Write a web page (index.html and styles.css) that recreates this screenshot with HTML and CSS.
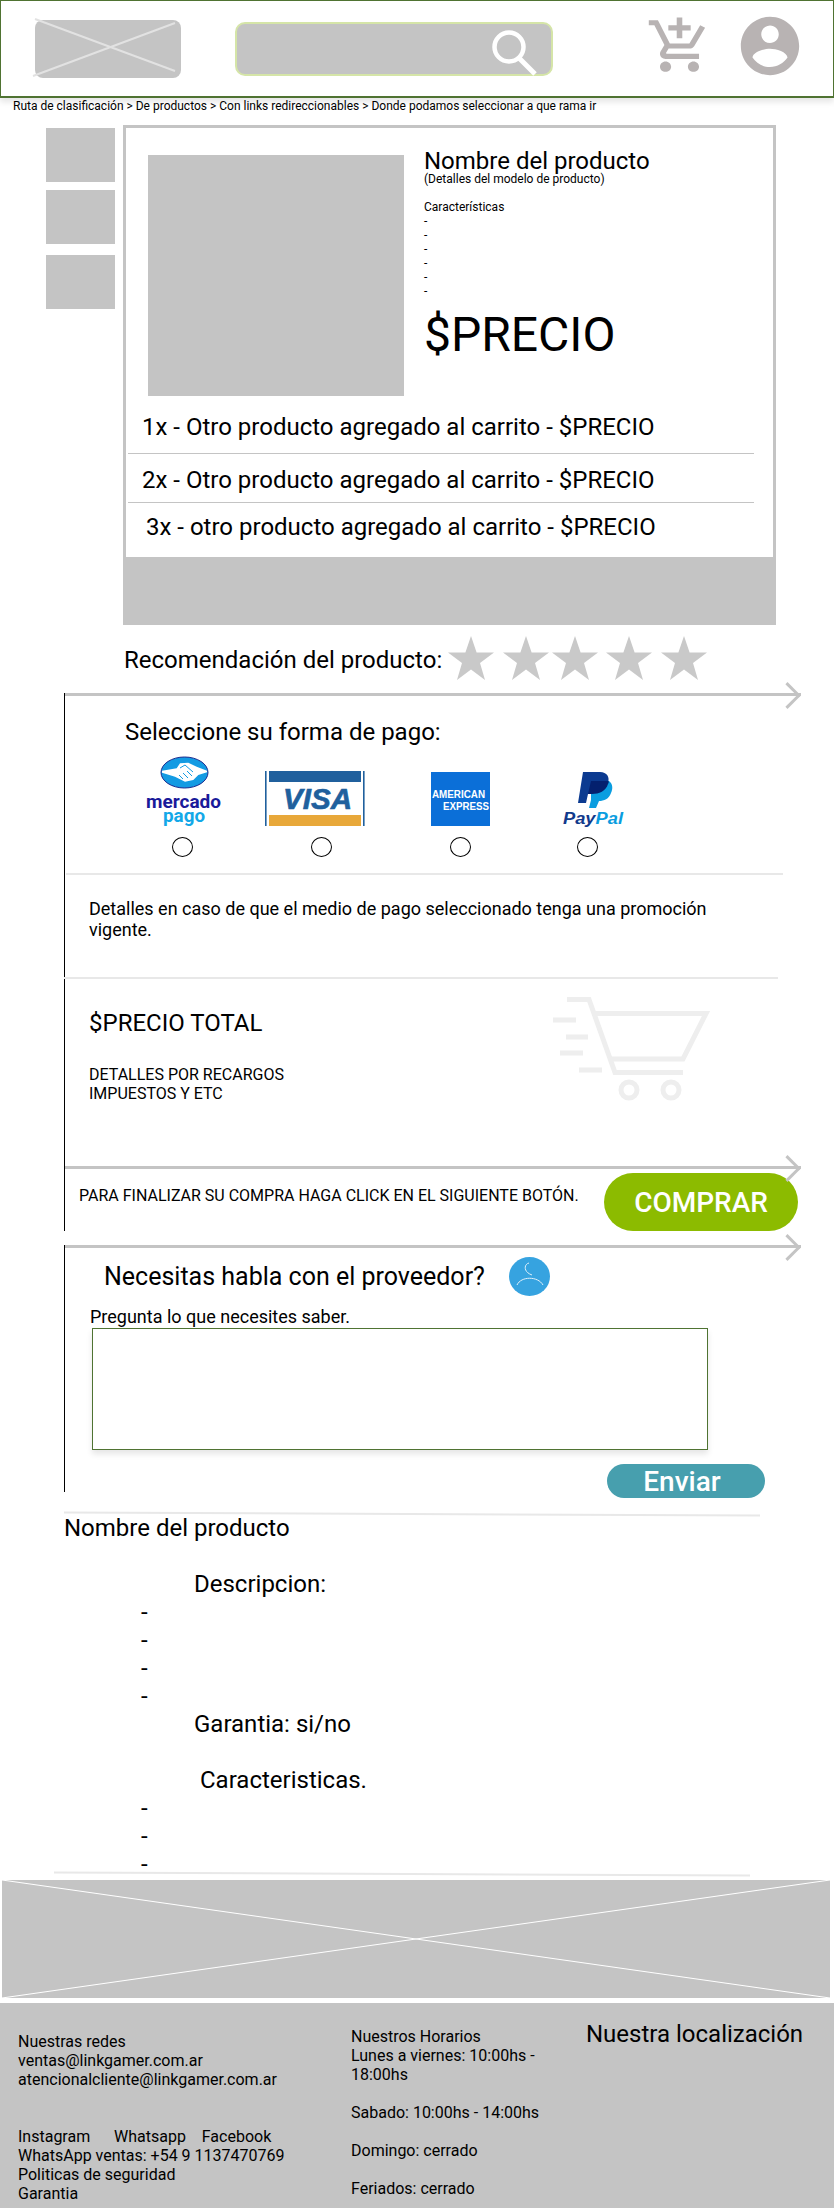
FILE: index.html
```html
<!doctype html>
<html>
<head>
    <meta charset="utf-8">
    <meta name="viewport" content="width=device-width,initial-scale=1">
    <title>Producto</title>
    <link rel="stylesheet" href="styles.css">
</head>

<body>
	<header class="top">
		<svg class="logo" viewBox="0 0 146 58" overflow="visible">
			<rect width="146" height="58" rx="8" fill="#c4c4c4"/>
			<path d="M0 -1L140 51M-2 56L140 3" stroke="#e2e2e2" stroke-width="2" fill="none"/>
		</svg>
		<div class="search">
			<svg class="search-icon" viewBox="0 0 48 48">
				<circle cx="18" cy="18" r="14.5" fill="none" stroke="#fff" stroke-width="4.5"/>
				<path d="M28 29L44 45" stroke="#fff" stroke-width="5" fill="none"/>
			</svg>
		</div>
		<svg class="cart" viewBox="0 0 24 24" preserveAspectRatio="none"><path fill="#b8b3b3" d="M11 9h2V6h3V4h-3V1h-2v3H8v2h3v3zm-4 9c-1.1 0-1.99.9-1.99 2S5.9 22 7 22s2-.9 2-2-.9-2-2-2zm10 0c-1.1 0-1.99.9-1.99 2s.89 2 1.99 2 2-.9 2-2-.9-2-2-2zm-9.83-3.25l.03-.12.9-1.63h7.45c.75 0 1.41-.41 1.75-1.03l3.86-7.01L19.42 4h-.01l-1.1 2-2.76 5H8.53l-.13-.27L6.16 6l-.95-2-.94-2H1v2h2l3.6 7.59-1.35 2.45c-.16.28-.25.61-.25.96 0 1.1.9 2 2 2h12v-2H7.42c-.13 0-.25-.11-.25-.25z"/></svg>
		<svg class="user" viewBox="0 0 24 24"><path fill="#b8b3b3" d="M12 2C6.48 2 2 6.48 2 12s4.48 10 10 10 10-4.48 10-10S17.52 2 12 2zm0 3c1.66 0 3 1.34 3 3s-1.34 3-3 3-3-1.34-3-3 1.34-3 3-3zm0 14.2c-2.5 0-4.71-1.28-6-3.22.03-1.99 4-3.08 6-3.08 1.99 0 5.97 1.09 6 3.08-1.29 1.94-3.5 3.22-6 3.22z"/></svg>
	</header>

	<div class="crumb">Ruta de clasificación &gt; De productos &gt; Con links redireccionables &gt; Donde podamos seleccionar a que rama ir</div>

	<section class="product">
		<div class="thumbs">
			<div class="thumb"></div>
			<div class="thumb"></div>
			<div class="thumb"></div>
		</div>
		<div class="box">
			<div class="box-main">
				<div class="photo"></div>
				<div class="info">
					<div class="info-name">Nombre del producto</div>
					<div class="info-model">(Detalles del modelo de producto)</div>
					<div class="info-list">Características<br>-<br>-<br>-<br>-<br>-<br>-</div>
					<div class="info-price">$PRECIO</div>
				</div>
			</div>
			<div class="extra extra-1">1x - Otro producto agregado al carrito - $PRECIO</div>
			<div class="extra extra-2">2x - Otro producto agregado al carrito - $PRECIO</div>
			<div class="extra extra-3">3x - otro producto agregado al carrito - $PRECIO</div>
			<div class="box-foot"></div>
		</div>
	</section>

	<div class="rating">
		<span class="rating-label">Recomendación del producto:</span>
		<svg class="star" viewBox="0 0 46 44"><path d="M23 0L28.6 16.5H46L32 27L37 44L23 33.5L9 44L14 27L0 16.5H17.4Z"/></svg>
		<svg class="star" viewBox="0 0 46 44"><path d="M23 0L28.6 16.5H46L32 27L37 44L23 33.5L9 44L14 27L0 16.5H17.4Z"/></svg>
		<svg class="star" viewBox="0 0 46 44"><path d="M23 0L28.6 16.5H46L32 27L37 44L23 33.5L9 44L14 27L0 16.5H17.4Z"/></svg>
		<svg class="star" viewBox="0 0 46 44"><path d="M23 0L28.6 16.5H46L32 27L37 44L23 33.5L9 44L14 27L0 16.5H17.4Z"/></svg>
		<svg class="star" viewBox="0 0 46 44"><path d="M23 0L28.6 16.5H46L32 27L37 44L23 33.5L9 44L14 27L0 16.5H17.4Z"/></svg>
	</div>

	<section class="pay">
		<div class="arrow"></div>
		<div class="pay-title">Seleccione su forma de pago:</div>
		<div class="methods">
			<svg class="mp" viewBox="0 0 76 70">
				<ellipse cx="38.5" cy="16.5" rx="23.5" ry="15.5" fill="#139be3" stroke="#1c2a8e" stroke-width="1"/>
				<path d="M16 14.7L30.7 12.3L34 7.3L42.3 6.7L50.7 10.7L61 14.7V16.3L52.3 19L47.3 24L39 25.7L29 20.7L16 16.7Z" fill="#fff"/>
				<path d="M34 12L39 9L47 16M33 19L37 23M37 17L42 22M41 15L46 20" stroke="#139be3" stroke-width="1" fill="none"/>
				<text x="0" y="52" class="mp-text" textLength="75" lengthAdjust="spacingAndGlyphs" fill="#1a1a9a">mercado</text>
				<text x="17" y="66" class="mp-text" textLength="42" lengthAdjust="spacingAndGlyphs" fill="#13a8e8">pago</text>
			</svg>
			<svg class="visa" viewBox="0 0 103 55">
				<rect x="2" width="1.6" height="55" fill="#20609d"/>
				<rect x="100" width="1.6" height="55" fill="#20609d"/>
				<rect x="6" width="92" height="11" fill="#20609d"/>
				<rect x="6" y="44" width="92" height="11" fill="#e8a83a"/>
				<text x="20" y="38" class="visa-text" textLength="69" lengthAdjust="spacingAndGlyphs">VISA</text>
			</svg>
			<svg class="amex" viewBox="0 0 59 54">
				<rect width="59" height="54" fill="#0b6fd8"/>
				<text x="1" y="26" class="amex-text" textLength="53" lengthAdjust="spacingAndGlyphs">AMERICAN</text>
				<text x="12" y="38" class="amex-text" textLength="46" lengthAdjust="spacingAndGlyphs">EXPRESS</text>
			</svg>
			<svg class="paypal" viewBox="0 0 60 54">
				<path d="M20 0H37C44 0 47 5 45 11C43 19 36 22 29 22H25L23 31H15Z" fill="#0b3a90"/>
				<path d="M28 9H46C50 12 50 17 48 21C46 27 41 29 36 29L33 36H26L28 28Z" fill="#0a9de0"/>
				<path d="M28 9H45.5C46 10 45.8 11 45 12C43 19 36 22 29 22H25Z" fill="#04206e"/>
				<text x="0" y="52" class="pp-text" textLength="60" lengthAdjust="spacingAndGlyphs"><tspan fill="#123a8c">Pay</tspan><tspan fill="#0a9de0">Pal</tspan></text>
			</svg>
		</div>
		<div class="radios">
			<span class="radio"></span>
			<span class="radio"></span>
			<span class="radio"></span>
			<span class="radio"></span>
		</div>
		<div class="line line-1"></div>
		<p class="promo">Detalles en caso de que el medio de pago seleccionado tenga una promoción vigente.</p>
		<div class="line line-2"></div>
		<div class="total">
			<div>
				<div class="total-price">$PRECIO TOTAL</div>
				<div class="total-details">DETALLES POR RECARGOS<br>IMPUESTOS Y ETC</div>
			</div>
			<svg class="total-cart" viewBox="0 0 158 104">
				<g fill="none" stroke="#eee" stroke-width="5">
					<path d="M15 2.5H37L63 75.5H131"/>
					<path d="M42 16.500H154L131 62H58"/>
					<path d="M1 23H24M14 40H36M8 56H31M27 73H50"/>
					<circle cx="77" cy="93" r="8"/>
					<circle cx="119" cy="93" r="8"/>
				</g>
			</svg>
		</div>
		<div class="arrow"></div>
		<div class="finish">
			<span class="finish-text">PARA FINALIZAR SU COMPRA HAGA CLICK EN EL SIGUIENTE BOTÓN.</span>
			<button class="buy">COMPRAR</button>
		</div>
	</section>

	<section class="contact">
		<div class="arrow"></div>
		<div class="contact-head">
			<span class="contact-title">Necesitas habla con el proveedor?</span>
			<svg class="contact-icon" viewBox="0 0 41 39">
				<ellipse cx="20.500" cy="19.500" rx="20.500" ry="19.500" fill="#36a3e0"/>
				<path d="M20 6C15 7 14 15 23 18M8 28C12 19 29 19 34 28" stroke="#dff0fb" stroke-width="1" fill="none"/>
			</svg>
		</div>
		<div class="contact-label">Pregunta lo que necesites saber.</div>
		<textarea class="contact-input"></textarea>
		<button class="send">Enviar</button>
	</section>

	<div class="line line-3"></div>
	<section class="desc">
		<div>Nombre del producto</div>
		<div>&nbsp;</div>
		<div class="desc-head">Descripcion:</div>
		<div class="desc-dash">-</div>
		<div class="desc-dash">-</div>
		<div class="desc-dash">-</div>
		<div class="desc-dash">-</div>
		<div class="desc-head">Garantia: si/no</div>
		<div>&nbsp;</div>
		<div class="desc-head desc-head-2">Caracteristicas.</div>
		<div class="desc-dash">-</div>
		<div class="desc-dash">-</div>
		<div class="desc-dash">-</div>
	</section>
	<div class="line line-4"></div>

	<svg class="banner" viewBox="0 0 828 118" preserveAspectRatio="none">
		<rect width="828" height="118" fill="#c4c4c4"/>
		<path d="M0 0L828 118M0 118L828 0" stroke="#fff" stroke-width="1" fill="none"/>
	</svg>

	<footer class="foot">
		<div class="foot-a">Nuestras redes<br>ventas@linkgamer.com.ar<br>atencionalcliente@linkgamer.com.ar<br><br><br>Instagram&nbsp;&nbsp;&nbsp;&nbsp;&nbsp;&nbsp;Whatsapp&nbsp;&nbsp;&nbsp;&nbsp;Facebook<br>WhatsApp ventas: +54 9 1137470769<br>Politicas de seguridad<br>Garantia</div>
		<div class="foot-b">Nuestros Horarios<br>Lunes a viernes: 10:00hs - 18:00hs<br><br>Sabado: 10:00hs - 14:00hs<br><br>Domingo: cerrado<br><br>Feriados: cerrado</div>
		<div class="foot-c">Nuestra localización</div>
	</footer>
</body>
</html>
```

FILE: styles.css
```css
*{margin:0; padding:0; box-sizing:border-box;}
body {width:834px; height:2208px; overflow:hidden; background:#fff; color:#000; font-family:Roboto,"Liberation Sans",sans-serif;}
button {font-family:inherit; border:0; color:#fff;}

/* header */
.top {display:flex; align-items:center; height:98px; border:1px solid #4f7332; border-bottom-width:2px; box-shadow:0 4px 6px rgba(0,0,0,.1);}
.logo {width:146px; height:58px; margin-left:34px; overflow:visible;}
.search {display:flex; justify-content:flex-end; width:318px; height:54px; margin-left:54px; padding:5px 12px 0 0; background:#c4c4c4; border:2px solid #d5e5a8; border-radius:10px;}
.search-icon {width:48px; height:48px;}
.cart {width:67px; height:62px; margin:0 0 5px 93px;}
.user {width:70px; height:70px; margin:0 0 6px 22px;}

.crumb {padding-left:13px; font-size:12px; line-height:14px; margin-top:1px;}

/* product */
.product {display:flex; margin:12px 0 0 46px;}
.thumbs {width:69px; margin:3px 8px 0 0;}
.thumb {height:54px; background:#c4c4c4; margin-bottom:8px;}
.thumb:nth-child(2) {margin-bottom:11px;}
.box {width:653px; height:500px; border:3px solid #c4c4c4; border-bottom:0;}
.box-main {display:flex; padding:19px 0 0 22px;}
.photo {width:256px; height:241px; margin-top:8px; background:#c4c4c4;}
.info {margin-left:20px;}
.info-name {font-size:24px; line-height:28px;}
.info-model {font-size:12px; line-height:14px; margin-top:-3px;}
.info-list {font-size:12px; line-height:14px; margin-top:14px;}
.info-price {font-size:48px; line-height:56px; margin:9px 0 0 0;}
.extra {font-size:24px; line-height:28px; margin-left:2px; width:626px;}
.extra-1 {padding:17px 0 12px 14px; border-bottom:1.5px solid #c4c4c4;}
.extra-2 {padding:12px 0 8px 14px; border-bottom:1.5px solid #c4c4c4;}
.extra-3 {padding:10px 0 16px 18px;}
.box-foot {height:68px; background:#c4c4c4; margin:0 -3px;}

.rating {display:flex; align-items:center; height:44px; margin:11px 0 0 124px;}
.rating-label {font-size:24px; line-height:28px; width:318px; margin:4px 6px 0 0; white-space:nowrap;}
.star {width:46px; height:44px; margin-right:9px; fill:#c9c9c9;}
.star:nth-of-type(2) {margin-right:3px;}
.star:nth-of-type(3) {margin-right:8px;}

/* arrows */
.arrow {position:relative; width:736px; height:3px; background:#c4c4c4;}
.arrow:after {content:""; position:absolute; right:4px; top:-7px; width:16px; height:16px; border-top:3px solid #c4c4c4; border-right:3px solid #c4c4c4; transform:rotate(45deg);}

/* pay */
.pay {width:770px; margin:13px 0 0 64px; border-left:1px solid #000;}
.pay-title {font-size:24px; line-height:28px; margin:22px 0 0 60px;}
.methods {display:flex; align-items:flex-end; height:70px; margin:10px 0 0 81px;}
.mp {width:76px; height:70px; overflow:visible;}
.mp-text {font-size:19px; font-weight:700;}
.visa {width:103px; height:55px; margin-left:41px;}
.visa-text {font:italic 700 29px "Liberation Sans",sans-serif; fill:#20609d; stroke:#20609d; stroke-width:.6;}
.amex {width:59px; height:54px; margin-left:65px; overflow:visible;}
.amex-text {font:700 11px "Liberation Sans",sans-serif; fill:#fff;}
.paypal {width:60px; height:54px; margin-left:73px; overflow:visible;}
.pp-text {font:italic 700 16px "Liberation Sans",sans-serif;}
.radios {display:flex; margin:11px 0 0 107px;}
.radio {width:21px; height:20px; border:1px solid #000; border-radius:50%; margin-right:118px;}
.radio:nth-child(3) {margin-right:106px;}
.line {height:2px; background:#e8e8e8;}
.line-1 {width:717px; margin:16px 0 0 1px;}
.promo {font-size:18px; line-height:21px; width:670px; margin:23px 0 0 24px;}
.line-2 {width:714px; margin:37px 0 0 -1px;}
.total {display:flex; justify-content:space-between; height:187px; padding:30px 124px 0 24px;}
.total-price {font-size:24px; line-height:28px;}
.total-details {font-size:16px; line-height:19px; margin-top:28px;}
.total-cart {width:158px; height:104px; margin-top:-12px;}
.finish {display:flex; height:62px;}
.finish-text {font-size:16px; line-height:19px; margin:17px 0 0 14px; white-space:nowrap;}
.buy {width:194px; height:58px; margin:4px 36px 0 auto; background:#8cbb00; border-radius:29px; font-size:28px; font-weight:500;}

/* contact */
.contact {width:770px; margin:14px 0 0 64px; border-left:1px solid #000; height:247px;}
.contact-head {display:flex; align-items:center; height:39px; margin:9px 0 0 39px;}
.contact-title {font-size:25px; line-height:28px;}
.contact-icon {width:41px; height:39px; margin-left:24px;}
.contact-label {font-size:18px; line-height:21px; margin:10px 0 0 25px;}
.contact-input {display:block; width:616px; height:122px; margin:1px 0 0 27px; border:1px solid #4f7332; box-shadow:0 4px 6px rgba(0,0,0,.1); resize:none; outline:0;}
.send {display:block; width:158px; height:34px; margin:14px 69px 0 auto; padding:2px 8px 0 0; background:#479fae; border-radius:17px; font-size:28px; font-weight:500; line-height:32px;}

/* description */
.line-3 {width:696px; margin:21px 0 0 64px; transform:rotate(.25deg);}
.desc {font-size:24px; line-height:28px; margin:-1px 0 0 64px;}
.desc-head {padding-left:130px;}
.desc-head-2 {padding-left:136px;}
.desc-dash {padding-left:77px;}
.line-4 {width:696px; margin:-5px 0 0 54px; transform:rotate(.25deg);}
.banner {display:block; width:828px; height:118px; margin:5px 0 0 2px;}

/* footer */
.foot {display:flex; height:205px; margin-top:5px; background:#c4c4c4; font-size:16px; line-height:19px;}
.foot-a {width:351px; padding:29px 0 0 18px;}
.foot-b {width:235px; padding:24px 25px 0 0;}
.foot-c {font-size:24px; line-height:28px; padding-top:17px; white-space:nowrap;}
```
